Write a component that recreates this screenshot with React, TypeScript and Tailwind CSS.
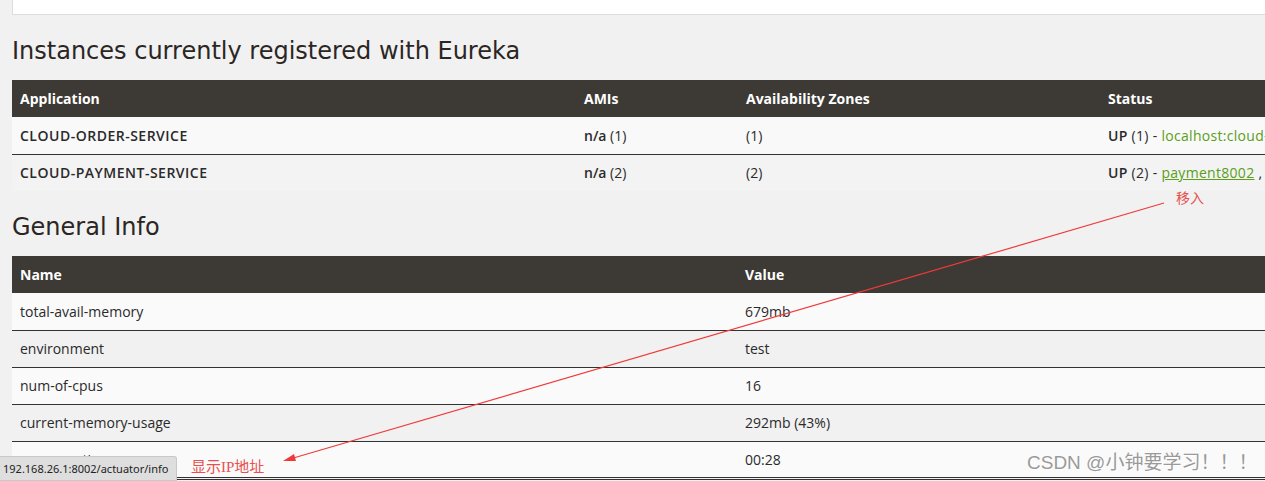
import React from "react";

const instances = [
  { app: "CLOUD-ORDER-SERVICE", amis: "1", zones: "(1)", count: "1", link: "localhost:cloud-order-service:80", underline: false },
  { app: "CLOUD-PAYMENT-SERVICE", amis: "2", zones: "(2)", count: "2", link: "payment8002", underline: true },
];

const info = [
  ["total-avail-memory", "679mb"],
  ["environment", "test"],
  ["num-of-cpus", "16"],
  ["current-memory-usage", "292mb (43%)"],
  ["server-uptime", "00:28"],
];

const headFont = { fontFamily: '"DejaVu Sans", sans-serif' };

export default function App() {
  return (
    <div className="relative w-[1265px] h-[481px] overflow-hidden bg-[#f1f1f1] text-[#2a2a2a]" style={{ fontFamily: '"Open Sans", sans-serif' }}>
      <div className="w-[1360px] pl-3">
        <div className="h-[15px] bg-white border border-t-0 border-[#dcdcdc]" />

        <h2 className="mt-[26px] h-[21px] text-[24px] leading-[21px] text-[#2b2623]" style={headFont}>
          Instances currently registered with Eureka
        </h2>

        <table className="mt-[18px] w-full table-fixed border-collapse text-[14px]">
          <thead>
            <tr className="h-[37px] bg-[#3d3934] text-white text-left">
              <th className="w-[564px] px-2 font-bold">Application</th>
              <th className="w-[162px] px-2 font-bold">AMIs</th>
              <th className="w-[362px] px-2 font-bold">Availability Zones</th>
              <th className="px-2 font-bold">Status</th>
            </tr>
          </thead>
          <tbody>
            {instances.map((r, i) => (
              <tr key={r.app} className={`h-[37px] ${i === 0 ? "bg-[#f9f9f9]" : "bg-[#f3f3f3] border-t border-[#333]"}`}>
                <td className="px-2 font-semibold tracking-[0.5px]">{r.app}</td>
                <td className="px-2"><b className="font-semibold">n/a</b> ({r.amis})</td>
                <td className="px-2">{r.zones}</td>
                <td className="px-2 whitespace-nowrap overflow-hidden tracking-[0.3px]">
                  <b className="font-semibold">UP</b> ({r.count}) - <span className={`text-[#5a9e1a] ${r.underline ? "underline" : ""}`}>{r.link}</span>
                  {r.underline ? " , payment8001" : ""}
                </td>
              </tr>
            ))}
          </tbody>
        </table>

        <h2 className="mt-[26px] h-[21px] text-[24px] leading-[21px] text-[#2b2623]" style={headFont}>
          General Info
        </h2>

        <table className="mt-[18px] w-full table-fixed border-collapse text-[14px]">
          <thead>
            <tr className="h-[37px] bg-[#3d3934] text-white text-left">
              <th className="w-[725px] px-2 font-bold">Name</th>
              <th className="px-2 font-bold">Value</th>
            </tr>
          </thead>
          <tbody>
            {info.map(([k, v], i) => (
              <tr key={k} className={`h-[37px] ${i % 2 === 0 ? "bg-[#fafafa]" : "bg-[#f1f1f1]"} ${i > 0 ? "border-t border-[#333]" : ""} ${i === info.length - 1 ? "border-b-[3px] border-double" : ""}`}>
                <td className="px-2">{k}</td>
                <td className="px-2">{v}</td>
              </tr>
            ))}
          </tbody>
        </table>
      </div>

      <svg className="absolute inset-0 pointer-events-none" width="1265" height="481">
        <line x1="1164" y1="203" x2="290" y2="459" stroke="#f03a3a" strokeWidth="1.2" />
        <polygon points="283,461 294,454 296,461" fill="#f03a3a" />
      </svg>

      <div className="absolute left-[1176px] top-[188px] text-[14px] text-[#e85050]" style={{ fontFamily: '"Liberation Serif", "Noto Sans CJK SC", serif' }}>
        移入
      </div>
      <div className="absolute left-[191px] top-[456px] text-[15px] text-[#e85050]" style={{ fontFamily: '"Liberation Serif", "Noto Sans CJK SC", serif' }}>
        显示IP地址
      </div>

      <div className="absolute left-0 top-[456px] h-[25px] w-[177px] bg-[#dedede] border border-l-0 border-[#c8c8c8] rounded-tr-[3px] pl-[3px] text-[11px] leading-[24px] text-[#222]" style={{ fontFamily: '"Noto Sans", sans-serif' }}>
        192.168.26.1:8002/actuator/info
      </div>

      <div className="absolute left-[1027px] top-[449px] text-[19px] text-[#9a9a9a]" style={{ fontFamily: '"Liberation Sans", "Noto Sans CJK SC", sans-serif', textShadow: "1px 1px 0 #fff" }}>
        CSDN @小钟要学习！！！
      </div>
    </div>
  );
}
